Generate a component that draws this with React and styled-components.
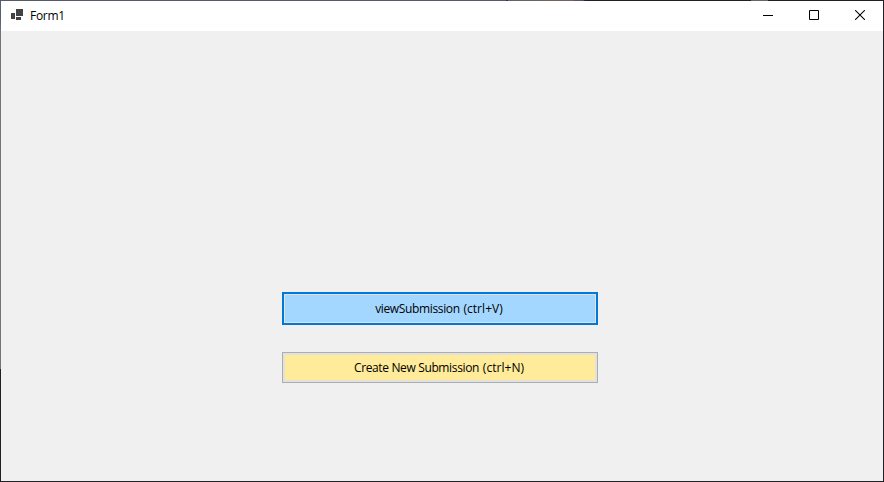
import React from "react";
import styled, { createGlobalStyle } from "styled-components";

const Global = createGlobalStyle`
  *{box-sizing:border-box}
  body{margin:0;overflow:hidden}
`;
const Window = styled.main`
  width:884px;height:482px;padding:1px;
  background:
    linear-gradient(90deg,#555b68 0 506px,#32353c 506px 508px,#62656c 508px 540px,#75625f 543px 573px,#4b596c 574px 583px,#232023 585px 751px,#666 751px 768px,#232023 768px) 0 0/884px 1px no-repeat,
    linear-gradient(#56606e 0 20px,#71747a 31px 369px,#232023 369px) 0 0/1px 482px no-repeat,
    #211f22;
  font:12px "Open Sans",sans-serif;color:#000;
  display:flex;flex-direction:column;
`;
const TitleBar = styled.header`
  height:30px;background:#fff;display:flex;align-items:flex-start;padding-left:10px;
`;
const AppIcon = styled.svg`
  margin-top:8px;
`;
const Title = styled.span`
  flex:1;margin-left:6px;line-height:29px;letter-spacing:-0.3px;
`;
const Caption = styled.button`
  width:46px;height:29px;padding:0 0 1px;border:0;background:none;display:grid;place-items:center;
`;
const Form = styled.section`
  flex:1;background:#f0f0f0;
  padding:261px 0 0 281px;display:flex;flex-direction:column;align-items:flex-start;gap:27px;
`;
const ActionButton = styled.button`
  width:316px;height:${p => (p.$primary ? 33 : 31)}px;padding:0 2px 0 0;
  font:12px "Open Sans",sans-serif;letter-spacing:-0.36px;color:#000;
  background:${p => (p.$primary ? "#a4d7ff" : "#ffeb99")};
  border:${p => (p.$primary ? "2px solid #0078d7" : "1px solid #adadad")};
  box-shadow:inset 0 0 0 ${p => (p.$primary ? "1px" : "2px")} #e1e1e1;
`;
const Shortcut = styled.span`
  margin-left:1px;letter-spacing:0.04px;
`;

export default function App() {
  return (
    <Window>
      <Global />
      <TitleBar>
        <AppIcon width="13" height="12" shapeRendering="crispEdges">
          <path fill="#424242" d="M5 0h7v7H5zM0 4h4v6H0zM5 8h5v3H5z" />
        </AppIcon>
        <Title>Form1</Title>
        <Caption aria-label="Minimize">
          <svg width="10" height="10" shapeRendering="crispEdges"><path d="M0 5h10v1H0z" /></svg>
        </Caption>
        <Caption aria-label="Maximize">
          <svg width="10" height="10"><path d="M.5.5h9v9h-9z" fill="none" stroke="#000" /></svg>
        </Caption>
        <Caption aria-label="Close">
          <svg width="10" height="10"><path d="M0 0l10 10M10 0L0 10" stroke="#000" strokeWidth="1.05" /></svg>
        </Caption>
      </TitleBar>
      <Form>
        <ActionButton $primary>viewSubmission <Shortcut>(ctrl+V)</Shortcut></ActionButton>
        <ActionButton>Create New Submission <Shortcut>(ctrl+N)</Shortcut></ActionButton>
      </Form>
    </Window>
  );
}
